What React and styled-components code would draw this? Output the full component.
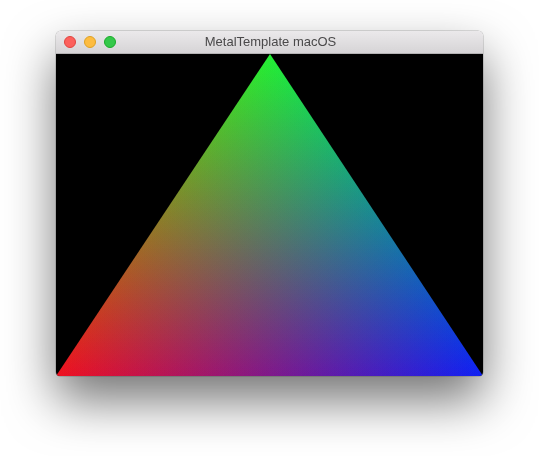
import React from "react";
import styled, { createGlobalStyle } from "styled-components";

const Global = createGlobalStyle`
  html, body { margin: 0; padding: 0; background: #ffffff; }
  body { width: 539px; height: 456px; overflow: hidden; }
`;

const Page = styled.div`
  width: 539px;
  height: 456px;
  box-sizing: border-box;
  padding: 31px 0 0 56px;
  display: flex;
  align-items: flex-start;
`;

const Window = styled.div`
  width: 427px;
  height: 345px;
  display: flex;
  flex-direction: column;
  border-radius: 5px 5px 4px 4px;
  overflow: hidden;
  box-shadow: 0 24px 50px rgba(0, 0, 0, 0.55), 0 0 0 0.5px rgba(0, 0, 0, 0.25);
`;

const TitleBar = styled.div`
  position: relative;
  height: 22px;
  flex: 0 0 22px;
  display: flex;
  align-items: center;
  padding-left: 8px;
  gap: 8px;
  background: linear-gradient(#ebe9eb, #d6d4d6);
  border-bottom: 1px solid #b4b2b4;
`;

const Light = styled.span`
  width: 12px;
  height: 12px;
  border-radius: 50%;
  box-sizing: border-box;
  background: ${(p) => p.$c};
  border: 0.5px solid ${(p) => p.$b};
`;

const Title = styled.div`
  position: absolute;
  left: 0;
  right: 0;
  top: 0;
  height: 22px;
  line-height: 22px;
  text-align: center;
  font-family: "Liberation Sans", Arial, sans-serif;
  font-size: 13px;
  color: #4a494a;
  padding-left: 2px;
`;

const Content = styled.div`
  flex: 1;
  background: #000;
  display: flex;
`;

const Canvas = styled.svg`
  display: block;
  width: 427px;
  height: 322px;
`;

const Tri = styled.polygon`
  mix-blend-mode: plus-lighter;
`;

const PTS = "214,0 0,322 427,322";

export default function App() {
  return (
    <>
      <Global />
      <Page>
        <Window>
          <TitleBar>
            <Light $c="#fc605c" $b="#e0443e" />
            <Light $c="#fdbc40" $b="#dea123" />
            <Light $c="#34c84a" $b="#1aab29" />
            <Title>MetalTemplate macOS</Title>
          </TitleBar>
          <Content>
            <Canvas viewBox="0 0 427 322">
              <defs>
                <linearGradient id="gG" gradientUnits="userSpaceOnUse" x1="214" y1="0" x2="214" y2="322">
                  <stop offset="0" stopColor="#22f033" />
                  <stop offset="1" stopColor="#000" />
                </linearGradient>
                <linearGradient id="gR" gradientUnits="userSpaceOnUse" x1="0" y1="322" x2="297" y2="125.5">
                  <stop offset="0" stopColor="#f01020" />
                  <stop offset="1" stopColor="#000" />
                </linearGradient>
                <linearGradient id="gB" gradientUnits="userSpaceOnUse" x1="427" y1="322" x2="130.8" y2="125.2">
                  <stop offset="0" stopColor="#1020f4" />
                  <stop offset="1" stopColor="#000" />
                </linearGradient>
              </defs>
              <g style={{ isolation: "isolate" }}>
                <Tri points={PTS} fill="url(#gG)" />
                <Tri points={PTS} fill="url(#gR)" />
                <Tri points={PTS} fill="url(#gB)" />
              </g>
            </Canvas>
          </Content>
        </Window>
      </Page>
    </>
  );
}
